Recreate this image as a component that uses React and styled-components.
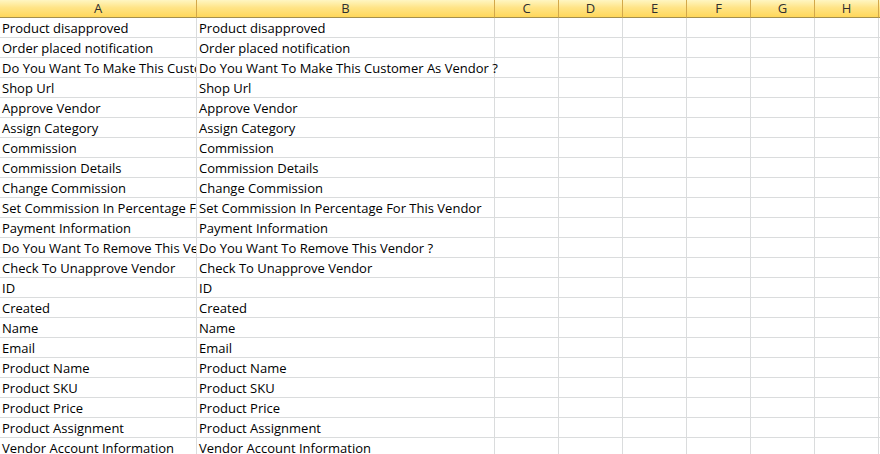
import React from "react";
import styled, { createGlobalStyle } from "styled-components";

const Global = createGlobalStyle`
  html, body { margin: 0; padding: 0; background: #ffffff; }
  body { font-family: "Open Sans", "Liberation Sans", sans-serif; }
`;

const COLS = [
  { key: "A", w: 197 },
  { key: "B", w: 298 },
  { key: "C", w: 64 },
  { key: "D", w: 64 },
  { key: "E", w: 64 },
  { key: "F", w: 64 },
  { key: "G", w: 64 },
  { key: "H", w: 64 },
  { key: "I", w: 64 },
];

const template = COLS.map((c) => `${c.w}px`).join(" ");

const Sheet = styled.div`
  width: 880px;
  height: 454px;
  overflow: hidden;
  background: #ffffff;
`;

const Grid = styled.div`
  display: grid;
  grid-template-columns: ${template};
  grid-auto-rows: 20px;
  grid-template-rows: 18px;
`;

const HeaderCell = styled.div`
  box-sizing: border-box;
  height: 18px;
  background: linear-gradient(#fff6c2 0%, #ffe487 45%, #ffd75a 100%);
  border-right: 1px solid #d3a84a;
  border-bottom: 1px solid #a38f4e;
  color: #2f2f2f;
  font-size: 13px;
  line-height: 17px;
  text-align: center;
  font-family: "Open Sans", "Liberation Sans", sans-serif;
`;

const Cell = styled.div`
  position: relative;
  z-index: ${(p) => (p.$spill ? 1 : 0)};
  box-sizing: border-box;
  height: 20px;
  border-right: 1px solid #dadcdd;
  border-bottom: 1px solid #dadcdd;
  padding-left: 2px;
  padding-top: 2px;
  font-size: 13px;
  line-height: 17px;
  color: #000000;
  white-space: nowrap;
  overflow: ${(p) => (p.$spill ? "visible" : "hidden")};
  font-family: "Open Sans", "Liberation Sans", sans-serif;
`;

const ROWS = [
  ["Product disapproved", "Product disapproved"],
  ["Order placed notification", "Order placed notification"],
  ["Do You Want To Make This Customer As Vendor ?", "Do You Want To Make This Customer As Vendor ?"],
  ["Shop Url", "Shop Url"],
  ["Approve Vendor", "Approve Vendor"],
  ["Assign Category", "Assign Category"],
  ["Commission", "Commission"],
  ["Commission Details", "Commission Details"],
  ["Change Commission", "Change Commission"],
  ["Set Commission In Percentage For This Vendor", "Set Commission In Percentage For This Vendor"],
  ["Payment Information", "Payment Information"],
  ["Do You Want To Remove This Vendor ?", "Do You Want To Remove This Vendor ?"],
  ["Check To Unapprove Vendor", "Check To Unapprove Vendor"],
  ["ID", "ID"],
  ["Created", "Created"],
  ["Name", "Name"],
  ["Email", "Email"],
  ["Product Name", "Product Name"],
  ["Product SKU", "Product SKU"],
  ["Product Price", "Product Price"],
  ["Product Assignment", "Product Assignment"],
  ["Vendor Account Information", "Vendor Account Information"],
];

export default function App() {
  return (
    <Sheet>
      <Global />
      <Grid>
        {COLS.map((c) => (
          <HeaderCell key={c.key}>{c.key === "I" ? "" : c.key}</HeaderCell>
        ))}
        {ROWS.map((r, i) =>
          COLS.map((c, j) => (
            <Cell key={`${i}-${c.key}`} $spill={j === 1}>
              {j < 2 ? r[j] : ""}
            </Cell>
          ))
        )}
      </Grid>
    </Sheet>
  );
}
